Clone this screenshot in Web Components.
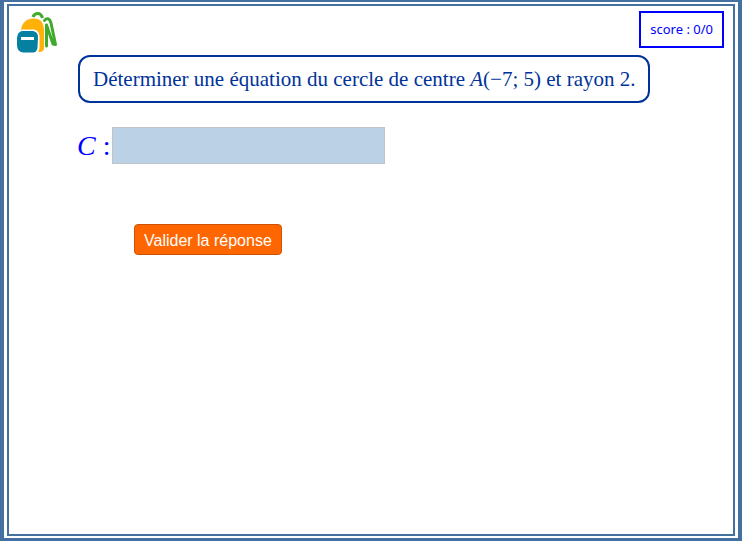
<!DOCTYPE html>
<html lang="fr">
<head>
<meta charset="utf-8">
<title>Équation de cercle</title>
<style>
html { height: 100%; background: #fff; }
body { margin: 0; height: 100%; }
</style>
</head>
<body>
<exercise-frame>
  <backpack-logo slot="logo"></backpack-logo>
  <score-box slot="score">score : 0/0</score-box>
  <question-box>Déterminer une équation du cercle de centre <i>A</i>(−7; 5) et rayon 2.</question-box>
  <answer-form></answer-form>
</exercise-frame>
<script>
function define(name, html) {
  const template = document.createElement('template');
  template.innerHTML = html;
  customElements.define(name, class extends HTMLElement {
    constructor() {
      super();
      this.attachShadow({ mode: 'open' }).append(template.content.cloneNode(true));
    }
  });
}

define('exercise-frame', `
<style>
:host { display: block; box-sizing: border-box; height: 100%; padding-right: 2px; }
.outer { box-sizing: border-box; height: 100%; border: solid #44719f; border-width: 2px 4px 3px; padding: 2px 3px; }
.inner { box-sizing: border-box; height: 100%; border: 2px solid #44719f; padding: 5px 9px 0 7px; }
header { display: flex; justify-content: space-between; align-items: flex-start; height: 44px; }
main { padding: 0 0 0 62px; }
</style>
<div class="outer"><div class="inner">
  <header><slot name="logo"></slot><slot name="score"></slot></header>
  <main><slot></slot></main>
</div></div>`);

define('backpack-logo', `
<style>:host { display: block; } svg { display: block; }</style>
<svg width="44" height="44" viewBox="0 0 44 44" fill="none" role="img" aria-label="Sac à dos">
  <path d="M17 6C18 3 19.500 2.500 22 2.500S25.500 4 26.500 7" stroke="#3faa2c" stroke-width="3"/>
  <path d="M28.500 9.500C31 6 34 8 35 12L39.500 33.500L37 33L30.500 14V35" stroke="#3faa2c" stroke-width="3" stroke-linejoin="round" stroke-linecap="round"/>
  <path d="M4.500 20C6 11 11 7.500 17.500 7.500C25 7.500 28 12 28 20V37Q28 41 23 41H5Z" fill="#ffb10a"/>
  <path d="M6 18.500H18Q23 19.500 23.500 25V37L22 42H6Q0 41 0 34V26Q1 19.500 6 18.500Z" fill="#fff"/>
  <path d="M6 20H17Q22 21 22 26L21.500 37Q20.500 41.500 17 41.500H7Q1 41 1 34V27Q1.500 21 6 20Z" fill="#0580a0"/>
  <path d="M5 27.500H18" stroke="#fff" stroke-width="3"/>
</svg>`);

define('score-box', `
<style>
:host { display: block; border: 2px solid #00f; padding: 8px 9px; font: 13px/17px "Noto Sans", sans-serif; color: #00f; white-space: nowrap; }
</style><slot></slot>`);

define('question-box', `
<style>
:host { display: block; box-sizing: border-box; width: fit-content; border: 2px solid #039; border-radius: 12px; padding: 10px 13px; font: 21px/24px "Liberation Serif", serif; color: #039; }
</style><slot></slot>`);

define('answer-form', `
<style>
:host { display: block; padding-top: 24px; }
form { display: grid; justify-items: start; row-gap: 60px; margin: 0; }
.row { display: flex; align-items: center; gap: 2px; font: 28px/32px "Liberation Serif", serif; color: #00f; margin-left: -1px; }
input { box-sizing: border-box; width: 273px; height: 37px; margin: 0; border: 1px solid #c0c4c8; border-radius: 0; background: #bbd2e6; padding: 4px 8px; font: inherit; color: inherit; }
button { box-sizing: border-box; height: 31px; margin: 0 0 0 56px; border: 1px solid #cc5200; border-radius: 4px; background: #f60; padding: 3px 9px 0; font: 16px/24px "Liberation Sans", sans-serif; color: #fff; }
</style>
<form>
  <div class="row"><label for="answer"><i>C</i> :</label><input id="answer" type="text"></div>
  <button type="button">Valider la réponse</button>
</form>`);
</script>
</body>
</html>
